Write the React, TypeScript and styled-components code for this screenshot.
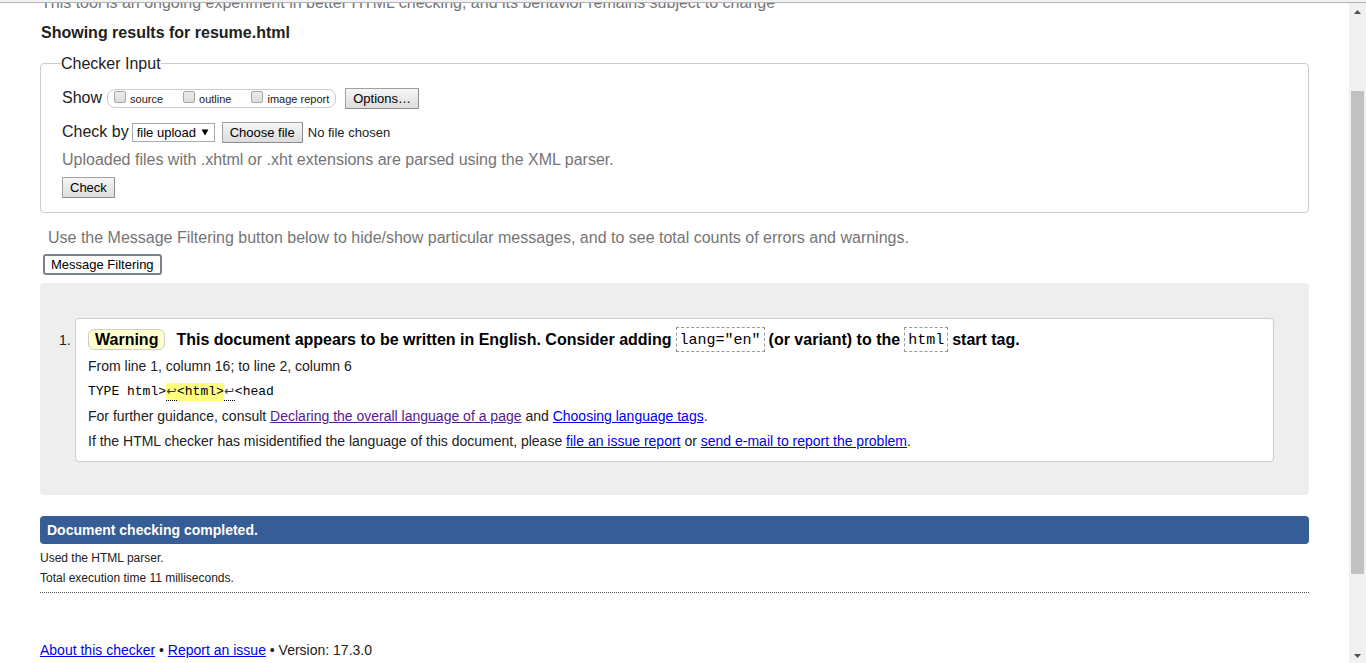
import React, { useRef } from "react";
import styled, { createGlobalStyle } from "styled-components";

const sans = `"Liberation Sans", Arial, sans-serif`;
const mono = `"Liberation Mono", Consolas, monospace`;

const GlobalStyle = createGlobalStyle`
  *, *::before, *::after { box-sizing: border-box; }
  body { margin: 0; background: #fff; color: #212121; font: 16px/20px ${sans}; }
  h1, p, ol { margin: 0; padding: 0; font: inherit; }
  a { color: #0000ee; }
`;

const Window = styled.div`
  display: flex;
  flex-direction: column;
  height: 100vh;
  overflow: hidden;
`;

const ToolbarEdge = styled.div`
  flex: none;
  height: 3px;
  background: #f2f2f2;
  border-bottom: 1px solid #b3b3b3;
`;

const Viewport = styled.div`
  display: flex;
  flex: 1;
  min-height: 0;
`;

const Page = styled.main`
  flex: 1;
  min-width: 0;
  padding: 0 40px;
  overflow: hidden;
`;

const Intro = styled.p`
  margin: -10px 1px 0;
  color: #757575;
`;

const Title = styled.h1`
  margin: 10px 1px 9px;
  font-weight: bold;
`;

const InputPanel = styled.fieldset`
  margin: 0;
  padding: 14px 21px 14px;
  border: 1px solid #ccc;
  border-radius: 4px;
`;

const Legend = styled.legend`
  margin-left: -1px;
  padding: 2px 0 0;
`;

const Row = styled.div<{ $top?: number }>`
  display: flex;
  align-items: center;
  margin-top: ${(p) => p.$top ?? 0}px;
`;

const RowText = styled.span`
  padding-bottom: 2px;
  line-height: 18px;
`;

const ShowGroup = styled.div`
  display: flex;
  align-items: center;
  height: 19px;
  margin: 0 9px 0 5px;
  padding: 0 6px;
  gap: 20px;
  border: 1px solid #ccc;
  border-radius: 8px;
  font-size: 11px;
`;

const CheckLabel = styled.label`
  display: flex;
  align-items: center;
  gap: 4px;
`;

const CheckBox = styled.input`
  appearance: none;
  width: 12px;
  height: 12px;
  margin: 0 0 4px;
  border: 1px solid #a6a6a6;
  border-radius: 2px;
  background: linear-gradient(#ececec, #dcdcdc);
`;

const Button = styled.button`
  height: 21px;
  padding: 0 7px;
  border: 1px solid #a0a0a0;
  border-right-color: #8c8c8c;
  border-bottom-color: #8c8c8c;
  border-radius: 1px;
  background: linear-gradient(#f6f6f6, #dddddd);
  color: #000;
  font: 13px/18px ${sans};
`;

const FocusedButton = styled(Button)`
  display: block;
  margin: 6px 3px 8px;
  padding: 0 6px;
  border: 2px solid #78828f;
  border-radius: 3px;
  background: #fff;
  line-height: 16px;
`;

const SelectBox = styled.span`
  display: grid;
  align-items: center;
  margin: 0 7px 0 3px;
`;

const Select = styled.select`
  grid-area: 1 / 1;
  appearance: none;
  width: 83px;
  height: 19px;
  padding: 0 4px;
  border: 1px solid #a9a9a9;
  border-radius: 0;
  background: #fff;
  color: #000;
  font: 13px/17px ${sans};
`;

const SelectArrow = styled.svg`
  grid-area: 1 / 1;
  justify-self: end;
  margin-right: 6px;
  pointer-events: none;
`;

const FileName = styled.span`
  margin-left: 5px;
  font-size: 13px;
`;

const Hint = styled.p<{ $top: number; $indent?: number }>`
  margin: ${(p) => p.$top}px 0 0 ${(p) => p.$indent ?? 0}px;
  color: #757575;
`;

const Results = styled.ol`
  padding: 35px 35px 33px;
  border-radius: 4px;
  background: #eee;
  list-style: none;
  counter-reset: message;
`;

const Message = styled.li`
  display: flex;
  counter-increment: message;
  font-size: 14px;
  line-height: 25px;

  &::before {
    content: counter(message) ".";
    flex: none;
    width: 16px;
    margin-left: -16px;
    padding-top: 10px;
  }
`;

const Card = styled.div`
  flex: 1;
  padding: 8px 12px 7px;
  border: 1px solid #ccc;
  border-radius: 4px;
  background: #fff;
`;

const Headline = styled.p`
  display: flex;
  align-items: center;
  gap: 4px;
  margin-bottom: 2px;
  color: #000;
  font-size: 16px;
  font-weight: bold;
`;

const Badge = styled.strong`
  margin-right: 7px;
  padding: 0 6px;
  border: 1px solid #ccc;
  border-radius: 6px;
  background: #ffffcc;
  line-height: 19px;
`;

const InlineCode = styled.code`
  padding: 2px 3px 0;
  border: 1px dashed #999;
  font: 15px/21px ${mono};
`;

const Extract = styled.code`
  display: flex;
  align-items: center;
  height: 25px;
  color: #000;
  font: 13px/17px ${mono};
`;

const Highlight = styled.mark`
  display: flex;
  background: #ffff80;
  color: inherit;
`;

const LineBreak = styled.span`
  width: 11px;
  height: 18px;
  border-bottom: 1px dotted #000;
  color: #333;
  font: 12px/17px "DejaVu Sans", sans-serif;
  text-align: center;
`;

const VisitedLink = styled.a`
  && { color: #551a8b; }
`;

const Status = styled.p`
  margin: 21px 0 4px;
  padding: 0 7px;
  border-radius: 4px;
  background: #365d95;
  color: #fff;
  font-size: 14px;
  font-weight: bold;
  line-height: 28px;
`;

const Stat = styled.p`
  font-size: 12px;
`;

const Footer = styled.footer`
  margin-top: 4px;
  padding-top: 47px;
  border-top: 1px dotted #555;
  font-size: 14px;
`;

const Scrollbar = styled.div`
  display: flex;
  flex: none;
  flex-direction: column;
  align-items: center;
  width: 17px;
  background: #f1f1f1;
`;

const ScrollArrow = styled.svg`
  flex: none;
`;

const ScrollSpace = styled.div<{ $grow: number }>`
  flex: ${(p) => p.$grow} 0 0;
`;

const Thumb = styled(ScrollSpace)`
  width: 13px;
  background: #c1c1c1;
`;

export default function App() {
  const fileInput = useRef<HTMLInputElement>(null);

  return (
    <Window>
      <GlobalStyle />
      <ToolbarEdge />
      <Viewport>
        <Page>
          <Intro>
            This tool is an ongoing experiment in better HTML checking, and its behavior remains subject to change
          </Intro>
          <Title>Showing results for resume.html</Title>

          <InputPanel>
            <Legend>Checker Input</Legend>
            <Row>
              <RowText>Show</RowText>
              <ShowGroup>
                {["source", "outline", "image report"].map((name) => (
                  <CheckLabel key={name}>
                    <CheckBox type="checkbox" />
                    {name}
                  </CheckLabel>
                ))}
              </ShowGroup>
              <Button type="button">Options…</Button>
            </Row>
            <Row $top={13}>
              <RowText as="label" htmlFor="method">
                Check by
              </RowText>
              <SelectBox>
                <Select id="method" defaultValue="file">
                  <option value="address">address</option>
                  <option value="file">file upload</option>
                  <option value="text">text input</option>
                </Select>
                <SelectArrow width="8" height="7" aria-hidden="true">
                  <path d="M0.5 0.5h7L4 6.5z" fill="#000" />
                </SelectArrow>
              </SelectBox>
              <Button type="button" onClick={() => fileInput.current?.click()}>Choose file</Button>
              <input ref={fileInput} type="file" aria-label="File" hidden />
              <FileName>No file chosen</FileName>
            </Row>
            <Hint $top={7}>Uploaded files with .xhtml or .xht extensions are parsed using the XML parser.</Hint>
            <Row $top={7}>
              <Button type="submit">Check</Button>
            </Row>
          </InputPanel>

          <Hint $top={15} $indent={8}>
            Use the Message Filtering button below to hide/show particular messages, and to see total counts of errors
            and warnings.
          </Hint>
          <FocusedButton type="button">Message Filtering</FocusedButton>

          <Results>
            <Message>
              <Card>
                <Headline>
                  <Badge>Warning</Badge>
                  <span>This document appears to be written in English. Consider adding</span>
                  <InlineCode>lang="en"</InlineCode>
                  <span>(or variant) to the</span>
                  <InlineCode>html</InlineCode>
                  <span>start tag.</span>
                </Headline>
                <p>From line 1, column 16; to line 2, column 6</p>
                <Extract>
                  <span>TYPE html&gt;</span>
                  <Highlight>
                    <LineBreak>↩</LineBreak>&lt;html&gt;
                  </Highlight>
                  <LineBreak>↩</LineBreak>
                  <span>&lt;head</span>
                </Extract>
                <p>
                  For further guidance, consult{" "}
                  <VisitedLink href="#declaring">Declaring the overall language of a page</VisitedLink> and{" "}
                  <a href="#choosing">Choosing language tags</a>.
                </p>
                <p>
                  If the HTML checker has misidentified the language of this document, please{" "}
                  <a href="#issue">file an issue report</a> or <a href="#mail">send e-mail to report the problem</a>.
                </p>
              </Card>
            </Message>
          </Results>

          <Status>Document checking completed.</Status>
          <Stat>Used the HTML parser.</Stat>
          <Stat>Total execution time 11 milliseconds.</Stat>

          <Footer>
            <a href="#about">About this checker</a> • <a href="#report">Report an issue</a> • Version: 17.3.0
          </Footer>
        </Page>

        <Scrollbar aria-hidden="true">
          <ScrollArrow width="17" height="17">
            <path d="M5 11h7L8.500 7z" fill="#505050" />
          </ScrollArrow>
          <ScrollSpace $grow={71} />
          <Thumb $grow={483} />
          <ScrollSpace $grow={72} />
          <ScrollArrow width="17" height="17">
            <path d="M5 8h7l-3.500 4z" fill="#505050" />
          </ScrollArrow>
        </Scrollbar>
      </Viewport>
    </Window>
  );
}
